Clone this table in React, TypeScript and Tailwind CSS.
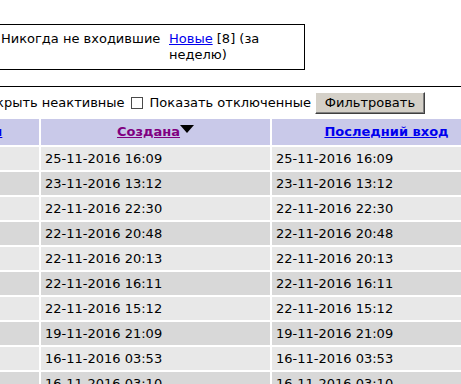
const rows = [
  '25-11-2016 16:09',
  '23-11-2016 13:12',
  '22-11-2016 22:30',
  '22-11-2016 20:48',
  '22-11-2016 20:13',
  '22-11-2016 16:11',
  '22-11-2016 15:12',
  '19-11-2016 21:09',
  '16-11-2016 03:53',
  '16-11-2016 03:10',
];

function SortArrow() {
  return (
    <svg width="14" height="8" viewBox="0 0 14 8" className="inline-block align-[3px]">
      <polygon points="0,0 14,0 7,8" fill="#000" />
    </svg>
  );
}

export default function App() {
  return (
    <div className="h-screen overflow-hidden bg-white text-black font-['DejaVu_Sans',sans-serif] text-[13px] leading-4">
      {/* summary box */}
      <div className="mt-[24px] -ml-[12px] w-[317px] border border-black py-[6px] pl-[12px] pr-[4px] grid grid-cols-[168px_1fr]">
        <div>Никогда не входившие</div>
        <div>
          <a href="#" className="text-[#0000ee] underline">Новые</a> [8] (за неделю)
        </div>
      </div>

      <div className="mt-[16px] h-px bg-black" />

      {/* filters */}
      <div className="flex items-center pt-[5px] pb-[3px] -ml-[13px] whitespace-nowrap">
        <span>Скрыть неактивные</span>
        <span className="ml-[6px] w-[12px] h-[12px] border border-[#4a4a4a] bg-white" />
        <span className="ml-[7px]">Показать отключенные</span>
        <button className="ml-[4px] h-[22px] w-[110px] bg-[#d4d0c8] border border-t-white border-l-white border-r-[#404040] border-b-[#404040] shadow-[inset_-1px_-1px_0_#808080] text-black">
          Фильтровать
        </button>
      </div>

      {/* users table */}
      <table className="-ml-[81px] table-fixed border-separate border-spacing-[2px] w-[584px]">
        <colgroup>
          <col className="w-[118px]" />
          <col className="w-[229px]" />
          <col className="w-[229px]" />
        </colgroup>
        <thead>
          <tr className="bg-[#c9c9e9] h-[26px]">
            <th className="px-[4px] py-0 text-center font-bold">
              <a href="#" className="text-[#0000ee] underline">Логин</a>
            </th>
            <th className="px-[4px] py-0 text-center font-bold">
              <a href="#" className="text-[#800080] underline">Создана</a>
              <SortArrow />
            </th>
            <th className="px-[4px] py-0 text-center font-bold">
              <a href="#" className="text-[#0000ee] underline">Последний вход</a>
            </th>
          </tr>
        </thead>
        <tbody>
          {rows.map((d, i) => (
            <tr key={i} className={i % 2 === 0 ? 'bg-[#e8e8e8] h-[23px]' : 'bg-[#d8d8d8] h-[23px]'}>
              <td className="px-[4px] py-0" />
              <td className="px-[4px] py-0 whitespace-nowrap">{d}</td>
              <td className="px-[4px] py-0 whitespace-nowrap">{d}</td>
            </tr>
          ))}
        </tbody>
      </table>
    </div>
  );
}
